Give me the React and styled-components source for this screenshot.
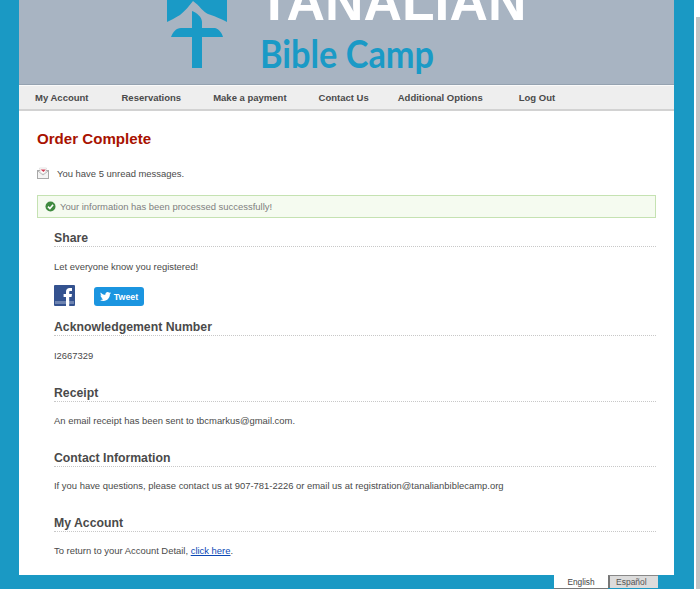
import React from "react";
import styled, { createGlobalStyle } from "styled-components";
import { FaTwitter } from "react-icons/fa";

const Global = createGlobalStyle`
  html, body { margin: 0; padding: 0; overflow: hidden; background: #fff; }
  body { font-family: "Liberation Sans", Arial, sans-serif; }
`;

const Shell = styled.div`
  display: flex;
  width: 700px;
  height: 589px;
  overflow: hidden;
`;
const Backdrop = styled.div`
  width: 694px;
  height: 589px;
  flex: none;
  padding-left: 19px;
  box-sizing: border-box;
  background: #1a99c4;
`;
const ScrollTrack = styled.div`
  flex: 1;
  padding: 17px 0 0 2px;
  background: #fff;
`;
const ScrollThumb = styled.div`
  height: 572px;
  background: #c4c4c4;
`;
const Page = styled.div`
  width: 655px;
  height: 575px;
  background: #fff;
  display: flex;
  flex-direction: column;
`;
const Banner = styled.header`
  height: 85px;
  flex: none;
  box-sizing: border-box;
  background: #a8b4c2;
  border-bottom: 1px solid #95a2b0;
  display: flex;
  gap: 35px;
  padding-left: 148px;
  overflow: hidden;
`;
const Logo = styled.svg`
  width: 60px;
  height: 70px;
  flex: none;
`;
const Wordmark = styled.div`
  display: flex;
  flex-direction: column;
  width: 300px;
  flex: none;
`;
const Tanalian = styled.div`
  font-size: 53.3px;
  font-weight: 700;
  line-height: 37px;
  height: 20px;
  margin-left: -4px;
  color: #fff;
  display: flex;
  align-items: flex-end;
`;
const BibleCamp = styled.div`
  margin: 10px 0 0 -2px;
  font-family: "Lato", sans-serif;
  font-weight: 700;
  font-size: 39px;
  line-height: 46px;
  color: #1a9ac6;
  transform: scaleX(0.88);
  transform-origin: left top;
  white-space: nowrap;
`;
const Nav = styled.nav`
  height: 26px;
  flex: none;
  box-sizing: border-box;
  background: #eeeeee;
  border-top: 1px solid #fafafa;
  border-bottom: 2px solid #d2d2d2;
  display: flex;
  align-items: center;
  padding: 0 0 1px 16px;
`;
const NavItem = styled.a`
  font-size: 9.5px;
  font-weight: 700;
  color: #4a4a4a;
  margin-right: ${(p) => p.$gap || 32}px;
  white-space: nowrap;
`;
const Content = styled.main`
  flex: 1;
  padding: 0 18px 0 18px;
  display: flex;
  flex-direction: column;
`;
const PageTitle = styled.h1`
  margin: 19px 0 0;
  font-size: 15.1px;
  line-height: 18px;
  font-weight: 700;
  color: #a81200;
`;
const MessageRow = styled.div`
  margin-top: 18px;
  height: 14px;
  display: flex;
  align-items: center;
  gap: 8px;
  font-size: 9.45px;
  color: #4a4a4a;
`;
const Alert = styled.div`
  margin-top: 15px;
  height: 23px;
  box-sizing: border-box;
  border: 1px solid #c5e2b2;
  background: #f5fbf0;
  display: flex;
  align-items: center;
  gap: 4px;
  padding-left: 7px;
  font-size: 9.45px;
  color: #7f7f7f;
`;
const Section = styled.section`
  margin-left: 17px;
  margin-top: ${(p) => p.$top || 0}px;
`;
const SectionTitle = styled.h2`
  margin: 0;
  height: 19px;
  box-sizing: border-box;
  border-bottom: 1px dotted #c8c8c8;
  font-size: 12.25px;
  line-height: 20px;
  font-weight: 700;
  color: #4a4a4a;
`;
const Body = styled.p`
  margin: ${(p) => p.$gap || 14}px 0 0;
  font-size: 9.43px;
  line-height: 12px;
  color: #4a4a4a;
`;
const TextLink = styled.a`
  color: #0a47b5;
  text-decoration: underline;
`;
const ShareRow = styled.div`
  display: flex;
  align-items: flex-end;
  gap: 19px;
  margin-top: 12px;
`;
const FacebookBox = styled.svg`
  width: 21px;
  height: 21px;
  flex: none;
`;
const TweetButton = styled.div`
  width: 50px;
  height: 19px;
  box-sizing: border-box;
  background: #1b95e0;
  border-radius: 3px;
  display: flex;
  align-items: center;
  justify-content: center;
  gap: 3px;
  color: #fff;
  font-size: 8.8px;
  font-weight: 700;
`;
const LangBar = styled.div`
  display: flex;
  align-items: flex-start;
  padding-left: 535px;
  height: 14px;
`;
const LangActive = styled.div`
  width: 54px;
  height: 14px;
  background: #fff;
  box-sizing: border-box;
  border-bottom: 1px solid #777;
  text-align: center;
  padding-top: 2px;
  font-size: 8.3px;
  line-height: 10px;
  color: #444;
`;
const LangOther = styled.div`
  width: 50px;
  height: 13px;
  box-sizing: border-box;
  background: #dcdcdc;
  border-top: 1px solid #888;
  border-left: 2px solid #777;
  padding-left: 6px;
  font-size: 8.5px;
  line-height: 12px;
  color: #555;
`;

const LogoMark = () => (
  <Logo viewBox="0 0 60 70">
    <path d="M0 0H60V22C52 18 47 16 41 14C36 12 33 6 26 1C22 6 18 11 13 15C8 18 4 20 0 22Z" fill="#1a9ac6" />
    <path d="M25 11C30 13 35 17 35 22V28H48C52 29 55 33 56 37H35V68H25V37H4C6 32 9 28 14 28H25Z" fill="#1a9ac6" />
  </Logo>
);

const Envelope = () => (
  <svg width="12" height="12" viewBox="0 0 12 12">
    <rect x="0.5" y="3.5" width="11" height="8" fill="#f4f4f4" stroke="#a9a9a9" />
    <path d="M1 4L6 8L11 4" fill="none" stroke="#b5b5b5" />
    <path d="M2.5 1H9.5L8.5 5.5L6 7L3.5 5.5Z" fill="#fff" stroke="#c9c9c9" strokeWidth="0.5" />
    <path d="M3.5 2.5H8.8L6.5 5L5 3.8Z" fill="#cf3b52" />
  </svg>
);

const Check = () => (
  <svg width="11" height="11" viewBox="0 0 11 11">
    <circle cx="5.5" cy="5.5" r="5" fill="#3f8a3f" />
    <path d="M3 5.6L4.9 7.5L8.1 3.8" fill="none" stroke="#fff" strokeWidth="1.6" />
  </svg>
);

const Facebook = () => (
  <FacebookBox viewBox="0 0 21 21">
    <rect width="21" height="21" rx="1" fill="#34528f" />
    <rect x="1" y="16" width="19" height="3" fill="#6d83b0" />
    <path d="M12 21V12H9.6V9H12V6.8C12 4.2 13.5 3 15.6 3H18V6H16.3C15.4 6 15.2 6.4 15.2 7.1V9H18L17.5 12H15.2V21Z" fill="#fff" />
  </FacebookBox>
);

export default function App() {
  return (
    <Shell>
      <Global />
      <Backdrop>
        <Page>
          <Banner>
            <LogoMark />
            <Wordmark>
              <Tanalian>TANALIAN</Tanalian>
              <BibleCamp>Bible Camp</BibleCamp>
            </Wordmark>
          </Banner>
          <Nav>
            <NavItem $gap={33}>My Account</NavItem>
            <NavItem>Reservations</NavItem>
            <NavItem>Make a payment</NavItem>
            <NavItem $gap={29}>Contact Us</NavItem>
            <NavItem $gap={36}>Additional Options</NavItem>
            <NavItem>Log Out</NavItem>
          </Nav>
          <Content>
            <PageTitle>Order Complete</PageTitle>
            <MessageRow>
              <Envelope />
              You have 5 unread messages.
            </MessageRow>
            <Alert>
              <Check />
              Your information has been processed successfully!
            </Alert>
            <Section $top={10}>
              <SectionTitle>Share</SectionTitle>
              <Body>Let everyone know you registered!</Body>
              <ShareRow>
                <Facebook />
                <TweetButton>
                  <FaTwitter size={11} />
                  Tweet
                </TweetButton>
              </ShareRow>
            </Section>
            <Section $top={11}>
              <SectionTitle>Acknowledgement Number</SectionTitle>
              <Body>I2667329</Body>
            </Section>
            <Section $top={21}>
              <SectionTitle>Receipt</SectionTitle>
              <Body $gap={13}>An email receipt has been sent to tbcmarkus@gmail.com.</Body>
            </Section>
            <Section $top={21}>
              <SectionTitle>Contact Information</SectionTitle>
              <Body $gap={13}>If you have questions, please contact us at 907-781-2226 or email us at registration@tanalianbiblecamp.org</Body>
            </Section>
            <Section $top={21}>
              <SectionTitle>My Account</SectionTitle>
              <Body $gap={13}>
                To return to your Account Detail, <TextLink>click here</TextLink>.
              </Body>
            </Section>
          </Content>
        </Page>
        <LangBar>
          <LangActive>English</LangActive>
          <LangOther>Español</LangOther>
        </LangBar>
      </Backdrop>
      <ScrollTrack>
        <ScrollThumb />
      </ScrollTrack>
    </Shell>
  );
}
